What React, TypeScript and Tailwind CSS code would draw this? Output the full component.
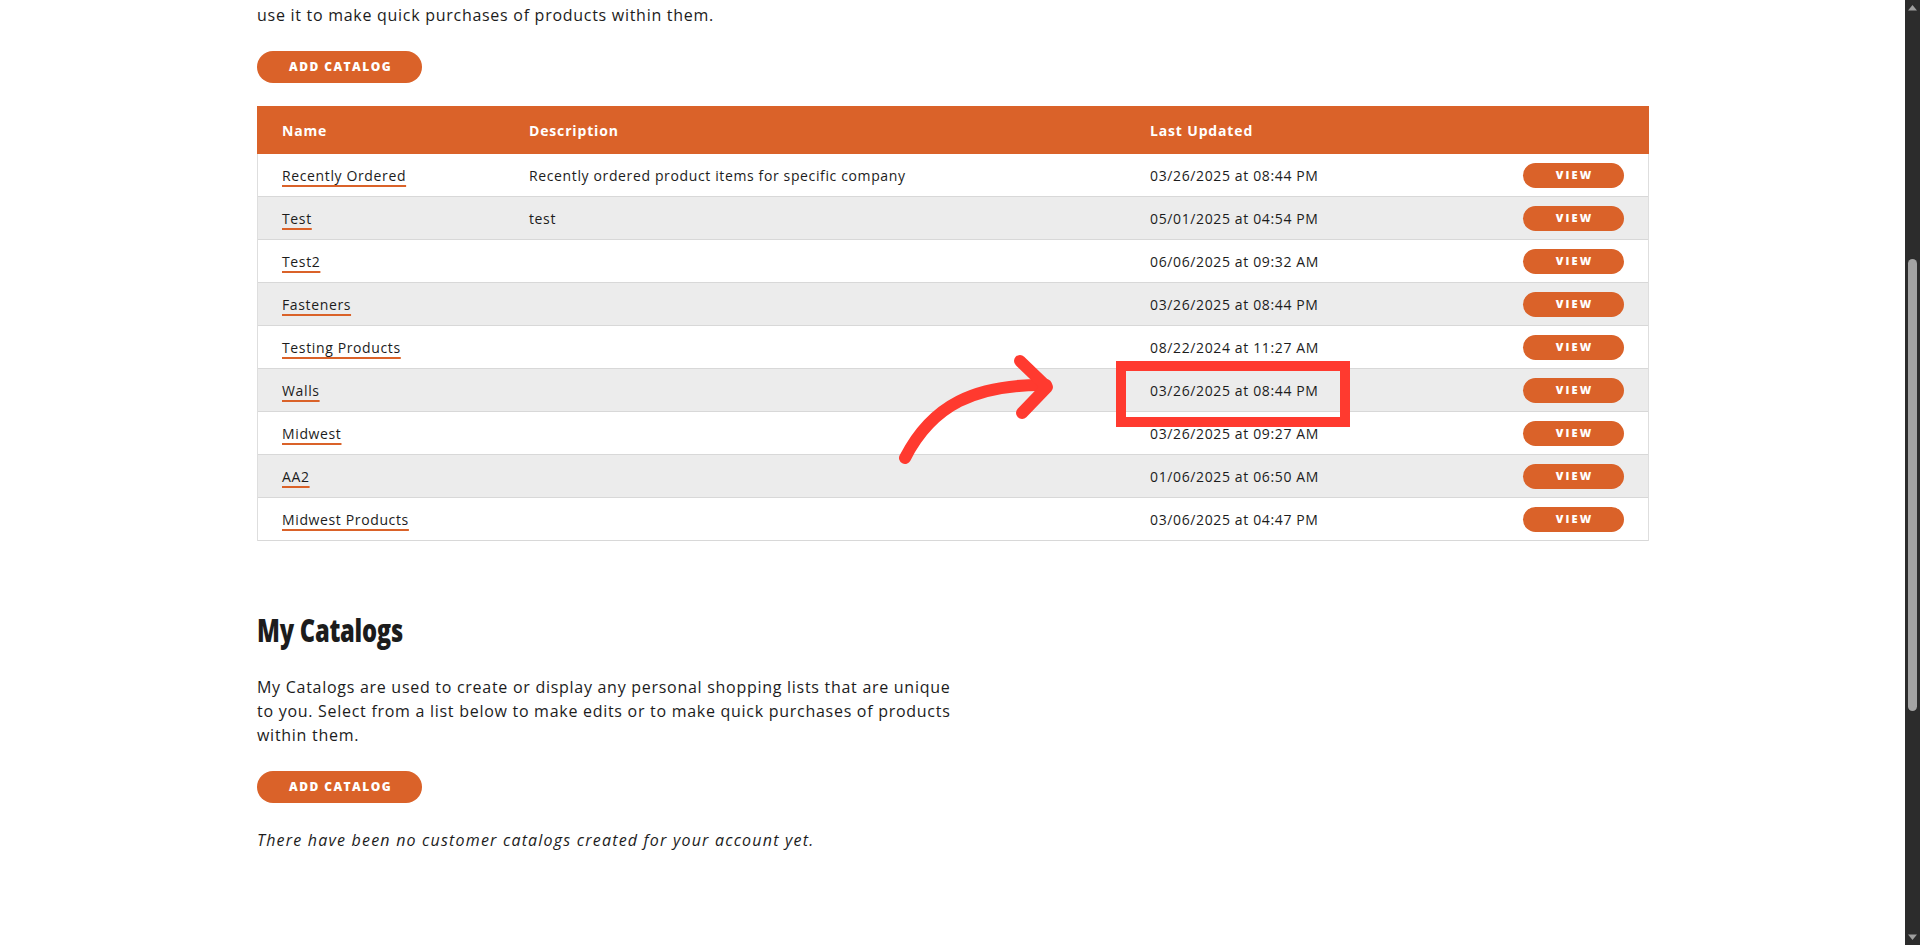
import React from "react";

const ORANGE = "bg-[#da6229]";

type Row = { name: string; desc: string; date: string };

const rows: Row[] = [
  { name: "Recently Ordered", desc: "Recently ordered product items for specific company", date: "03/26/2025 at 08:44 PM" },
  { name: "Test", desc: "test", date: "05/01/2025 at 04:54 PM" },
  { name: "Test2", desc: "", date: "06/06/2025 at 09:32 AM" },
  { name: "Fasteners", desc: "", date: "03/26/2025 at 08:44 PM" },
  { name: "Testing Products", desc: "", date: "08/22/2024 at 11:27 AM" },
  { name: "Walls", desc: "", date: "03/26/2025 at 08:44 PM" },
  { name: "Midwest", desc: "", date: "03/26/2025 at 09:27 AM" },
  { name: "AA2", desc: "", date: "01/06/2025 at 06:50 AM" },
  { name: "Midwest Products", desc: "", date: "03/06/2025 at 04:47 PM" },
];

function AddCatalog({ className = "" }: { className?: string }) {
  return (
    <button
      className={`${ORANGE} ${className} flex h-[32px] w-[165px] items-center justify-center rounded-full pl-[2px] text-[12px] font-extrabold tracking-[0.12em] text-white`}
    >
      ADD CATALOG
    </button>
  );
}

export default function App() {
  return (
    <div
      className="relative flex h-[945px] w-full overflow-hidden bg-white text-[#1c1c1c]"
      style={{ fontFamily: '"Open Sans", "Noto Sans", sans-serif' }}
    >
      <main className="flex-1 pl-[257px] pt-[3px]">
        <p className="text-[16px] leading-[24px] tracking-[0.045em]">
          use it to make quick purchases of products within them.
        </p>
        <AddCatalog className="mt-[24px]" />

        <div className="mt-[23px] w-[1392px]">
          <div
            className={`${ORANGE} grid h-[48px] grid-cols-[247px_621px_373px_151px] items-center text-[14px] font-bold tracking-[0.06em] text-white`}
          >
            <div className="pl-[25px]">Name</div>
            <div className="pl-[25px]">Description</div>
            <div className="pl-[25px]">Last Updated</div>
            <div />
          </div>
          <div className="border-x border-[#dedede]">
            {rows.map((r, i) => (
              <div
                key={i}
                className={`grid h-[43px] grid-cols-[246px_621px_373px_150px] items-center border-b border-[#d8d8d8] text-[14px] tracking-[0.045em] ${
                  i % 2 === 1 ? "bg-[#ececec]" : "bg-white"
                }`}
              >
                <div className="pl-[24px]">
                  <a className="cursor-pointer underline decoration-[#da6229] decoration-[1.5px] underline-offset-[4px]">
                    {r.name}
                  </a>
                </div>
                <div className="pl-[25px]">{r.desc}</div>
                <div className="pl-[25px]">{r.date}</div>
                <div className="flex justify-end pr-[24px]">
                  <button
                    className={`${ORANGE} flex h-[25px] w-[101px] items-center justify-center rounded-full pl-[2px] text-[11px] font-extrabold tracking-[0.2em] text-white`}
                  >
                    VIEW
                  </button>
                </div>
              </div>
            ))}
          </div>
        </div>

        <h2 className="mt-[71px] text-[32px] font-extrabold leading-[36px] text-[#1c1c1c]">
          <span className="inline-block origin-left scale-x-[0.74] tracking-[-0.01em]">My Catalogs</span>
        </h2>
        <p className="mt-[27px] w-[700px] text-[16px] leading-[24px] tracking-[0.045em]">
          My Catalogs are used to create or display any personal shopping lists that are unique to you. Select from a
          list below to make edits or to make quick purchases of products within them.
        </p>
        <AddCatalog className="mt-[24px]" />
        <p className="mt-[25px] text-[16px] italic leading-[24px] tracking-[0.075em]">
          There have been no customer catalogs created for your account yet.
        </p>
      </main>

      {/* fake scrollbar */}
      <div className="flex h-full w-[15px] flex-col items-center bg-[#2c2c2c]">
        <svg width="11" height="8" viewBox="0 0 11 8" className="mt-[4px]">
          <path d="M5.5 1 L10 6.5 L1 6.5 Z" fill="#9e9e9e" />
        </svg>
        <div className="mt-[247px] h-[452px] w-[9px] rounded-full bg-[#a3a3a3]" />
        <div className="flex-1" />
        <svg width="11" height="8" viewBox="0 0 11 8" className="mb-[4px]">
          <path d="M1 1.5 L10 1.5 L5.5 7 Z" fill="#9e9e9e" />
        </svg>
      </div>

      {/* annotation overlay */}
      <svg className="pointer-events-none absolute left-0 top-0" width="1920" height="945">
        <rect x="1121" y="366" width="224" height="56" fill="none" stroke="#ff3a2f" strokeWidth="10" />
        <path
          d="M905 458 C 932 405, 975 384, 1046 385"
          fill="none"
          stroke="#ff3a2f"
          strokeWidth="12"
          strokeLinecap="round"
        />
        <path
          d="M1020 361 L1047 387 L1022 413"
          fill="none"
          stroke="#ff3a2f"
          strokeWidth="12"
          strokeLinecap="round"
          strokeLinejoin="round"
        />
      </svg>
    </div>
  );
}
